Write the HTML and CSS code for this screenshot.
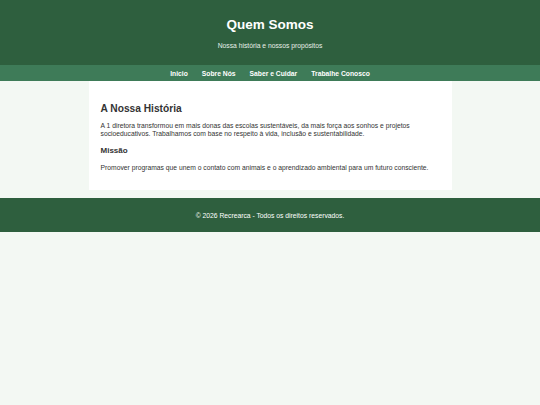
FILE: index.html
```html
<!DOCTYPE html>
<html lang="pt">
<head>
<meta charset="utf-8">
<title>Quem Somos</title>
<link rel="stylesheet" href="styles.css">
</head>
<body>
<header class="site-header">
  <h1 class="site-title">Quem Somos</h1>
  <p class="site-subtitle">Nossa história e nossos propósitos</p>
</header>
<nav class="site-nav">
  <a href="#">Inicio</a>
  <a href="#">Sobre Nós</a>
  <a href="#">Saber e Cuidar</a>
  <a href="#">Trabalhe Conosco</a>
</nav>
<main class="content">
  <h2 class="content-title">A Nossa História</h2>
  <p class="content-text">A 1 diretora transformou em mais donas das escolas sustentáveis, da mais força aos sonhos e projetos socioeducativos. Trabalhamos com base no respeito à vida, inclusão e sustentabilidade.</p>
  <h3 class="content-subtitle">Missão</h3>
  <p class="content-text">Promover programas que unem o contato com animais e o aprendizado ambiental para um futuro consciente.</p>
</main>
<footer class="site-footer">
  <p>© 2026 Recrearca - Todos os direitos reservados.</p>
</footer>
</body>
</html>
```
FILE: styles.css
```css
html, body {
  margin: 0;
  padding: 0;
}
body {
  background: #f3f8f3;
  font-family: "Liberation Sans", Arial, sans-serif;
  color: #333333;
}
.site-header {
  background: #2e5f3e;
  color: #ffffff;
  text-align: center;
  padding: 17px 0 15px;
  display: flex;
  flex-direction: column;
  gap: 8px;
}
.site-title {
  margin: 0;
  font-size: 13.5px;
  line-height: 16px;
  font-weight: bold;
}
.site-subtitle {
  margin: 0;
  font-size: 6.75px;
  line-height: 9px;
  color: #e8efe9;
}
.site-nav {
  background: #3e7b58;
  height: 16px;
  display: flex;
  justify-content: center;
  align-items: center;
  gap: 14px;
}
.site-nav a {
  color: #ffffff;
  text-decoration: none;
  font-weight: bold;
  font-size: 6.75px;
}
.content {
  width: 339px;
  margin: 0 auto;
  background: #ffffff;
  padding: 22px 12px 18px;
}
.content-title {
  margin: 0 0 7px;
  font-size: 10.2px;
  line-height: 12px;
}
.content-subtitle {
  margin: 7px 0 8px;
  font-size: 8px;
  line-height: 10px;
}
.content-text {
  margin: 0;
  font-size: 6.75px;
  line-height: 8.3px;
}
.site-footer {
  margin-top: 8.5px;
  background: #2e5f3e;
  color: #ffffff;
  text-align: center;
  height: 33.5px;
  display: flex;
  align-items: center;
  justify-content: center;
}
.site-footer p {
  margin: 0;
  font-size: 6.75px;
}
```
